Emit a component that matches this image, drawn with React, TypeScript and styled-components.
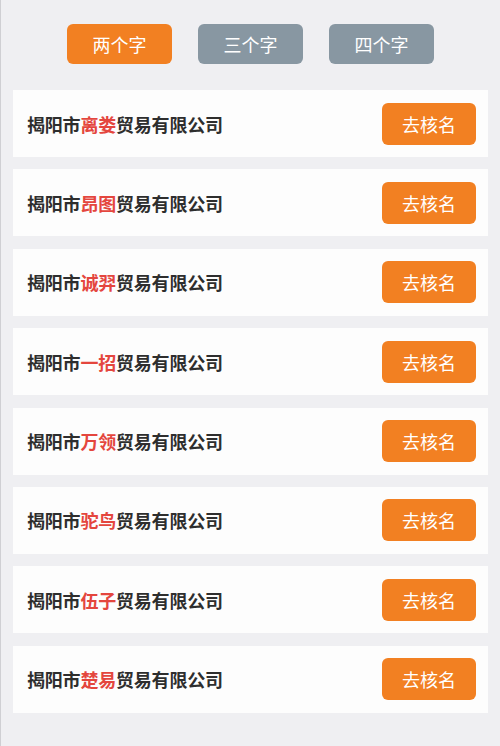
import React from "react";
import styled, { createGlobalStyle } from "styled-components";

const Global = createGlobalStyle`
  html, body { margin: 0; padding: 0; background: #efeff2; }
  body { font-family: "Noto Sans CJK SC", "Noto Sans", sans-serif; }
`;

const Page = styled.div`
  min-height: 746px;
  box-sizing: border-box;
  border-left: 1px solid #cfcfd3;
  background: #efeff2;
  padding: 24px 12px 0 12px;
`;

const Tabs = styled.div`
  display: flex;
  justify-content: center;
  gap: 26px;
  margin-bottom: 26px;
`;

const Tab = styled.button<{ $active?: boolean }>`
  width: 105px;
  height: 40px;
  border: none;
  border-radius: 6px;
  background: ${(p) => (p.$active ? "#f28022" : "#8897a2")};
  color: #fff;
  font-family: "Noto Sans CJK SC", sans-serif;
  font-size: 18px;
  font-weight: 400;
  padding: 0;
  cursor: pointer;
`;

const List = styled.div`
  display: flex;
  flex-direction: column;
  gap: 12.4px;
`;

const Card = styled.div`
  height: 67px;
  box-sizing: border-box;
  background: #fdfdfd;
  display: flex;
  align-items: center;
  justify-content: space-between;
  padding: 0 12px 0 14px;
`;

const Name = styled.div`
  font-size: 18px;
  font-weight: 700;
  color: #2e2e2e;
  letter-spacing: -0.2px;
`;

const Hi = styled.span`
  color: #e4463e;
`;

const Action = styled.button`
  width: 94px;
  height: 42px;
  border: none;
  border-radius: 6px;
  background: #f28022;
  color: #fff;
  font-family: "Noto Sans CJK SC", sans-serif;
  font-size: 18px;
  padding: 0;
  cursor: pointer;
`;

const names = ["离娄", "昂图", "诚羿", "一招", "万领", "驼鸟", "伍子", "楚易"];

export default function App() {
  return (
    <>
      <Global />
      <Page>
        <Tabs>
          <Tab $active>两个字</Tab>
          <Tab>三个字</Tab>
          <Tab>四个字</Tab>
        </Tabs>
        <List>
          {names.map((n) => (
            <Card key={n}>
              <Name>
                揭阳市<Hi>{n}</Hi>贸易有限公司
              </Name>
              <Action>去核名</Action>
            </Card>
          ))}
        </List>
      </Page>
    </>
  );
}
